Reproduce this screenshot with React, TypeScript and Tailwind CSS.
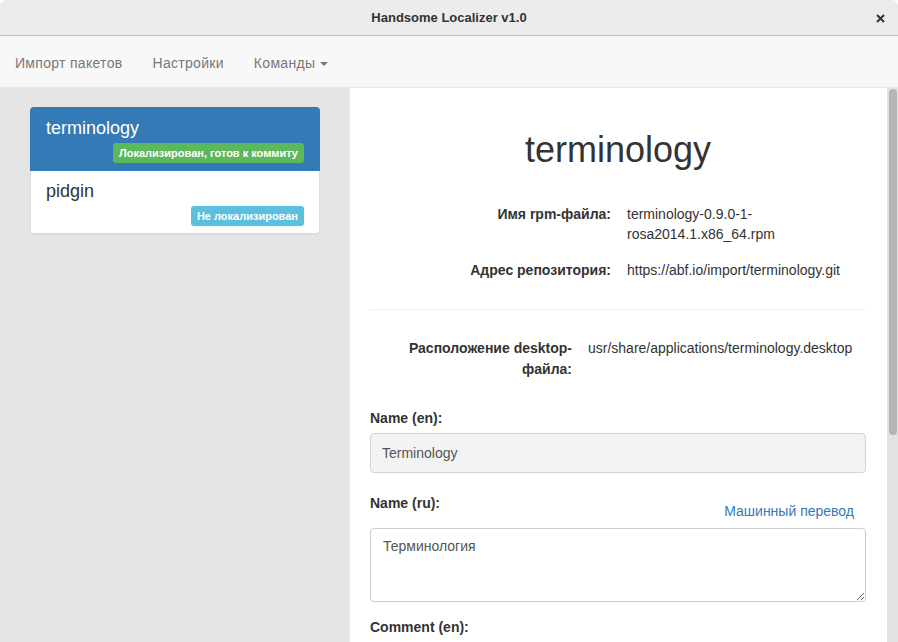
import React from "react";

const font = { fontFamily: '"Liberation Sans", Arial, sans-serif' };

function Badge({ color, children }: { color: string; children: React.ReactNode }) {
  return (
    <span
      className={`inline-flex h-[20px] items-center rounded-[3px] px-[6px] text-[11px] font-bold leading-none text-white ${color}`}
    >
      {children}
    </span>
  );
}

function PackageItem({ name, status, active }: any) {
  return (
    <div
      className={
        active
          ? "rounded-t-[4px] bg-[#337ab7] px-[16px] pb-[8px] pt-[11px] text-white"
          : "rounded-b-[4px] border-x border-b border-[#dddddd] bg-white px-[15px] pb-[7px] pt-[10px] text-[#333]"
      }
    >
      <div className="text-[18px] leading-[20px]">{name}</div>
      <div className="mt-[5px] flex justify-end">{status}</div>
    </div>
  );
}

export default function App() {
  return (
    <div className="flex h-[642px] w-[898px] flex-col overflow-hidden bg-white text-[14px] text-[#333]" style={font}>
      {/* window title */}
      <div className="relative flex h-[36px] shrink-0 items-center justify-center rounded-t-[6px] border-b border-[#bdbdbd] bg-[#ececec]">
        <span className="text-[13px] font-bold text-[#2e3436]">Handsome Localizer v1.0</span>
        <svg className="absolute right-[13px] top-[14px]" width="9" height="9" viewBox="0 0 9 9">
          <path d="M1 1L8 8M8 1L1 8" stroke="#2e3436" strokeWidth="2" />
        </svg>
      </div>

      {/* navbar */}
      <div className="flex h-[52px] shrink-0 items-center border-b border-[#e7e7e7] bg-[#f8f8f8] pt-[3px] tracking-[0.3px] text-[#777]">
        <span className="px-[15px]">Импорт пакетов</span>
        <span className="px-[15px]">Настройки</span>
        <span className="flex items-center px-[15px]">
          Команды
          <span className="ml-[5px] mt-[2px] h-0 w-0 border-x-[4px] border-t-[4px] border-x-transparent border-t-[#777]" />
        </span>
      </div>

      <div className="flex min-h-0 flex-1">
        {/* package list */}
        <div className="w-[350px] shrink-0 bg-[#e5e5e5] px-[30px] pt-[19px]">
          <div className="rounded-[4px] shadow-[0_1px_1px_rgba(0,0,0,0.05)]">
            <PackageItem
              active
              name="terminology"
              status={<Badge color="bg-[#5cb85c]">Локализирован, готов к коммиту</Badge>}
            />
            <PackageItem name="pidgin" status={<Badge color="bg-[#5bc0de]">Не локализирован</Badge>} />
          </div>
        </div>

        {/* details */}
        <div className="min-w-0 flex-1 pl-[20px] pr-[21px] pt-[42px]">
          <h1 className="text-center text-[36px] leading-[40px]">terminology</h1>

          <div className="mt-[34px] grid grid-cols-[241px_239px] gap-x-[16px] gap-y-[16px] leading-[20px]">
            <div className="text-right font-bold">Имя rpm-файла:</div>
            <div>
              terminology-0.9.0-1-
              <br />
              rosa2014.1.x86_64.rpm
            </div>
            <div className="text-right font-bold">Адрес репозитория:</div>
            <div>https://abf.io/import/terminology.git</div>
          </div>

          <div className="mt-[29px] h-px bg-[#eeeeee]" />

          <div className="mt-[28px] grid grid-cols-[202px_278px] gap-x-[16px] leading-[21px]">
            <div className="text-right font-bold">
              Расположение desktop-
              <br />
              файла:
            </div>
            <div>usr/share/applications/terminology.desktop</div>
          </div>

          <div className="mt-[28px] font-bold leading-[20px]">Name (en):</div>
          <input
            readOnly
            value="Terminology"
            className="mt-[5px] block h-[40px] w-full rounded-[4px] border border-[#d4d4d4] bg-[#f3f3f3] px-[11px] text-[14px] text-[#555] outline-none"
          />

          <div className="mt-[20px] flex items-start justify-between leading-[20px]">
            <span className="font-bold">Name (ru):</span>
            <span className="mr-[12px] mt-[8px] text-[#337ab7]">Машинный перевод</span>
          </div>
          <textarea
            readOnly
            defaultValue="Терминология"
            className="mt-[7px] block h-[74px] w-full resize-y rounded-[4px] border border-[#cccccc] bg-white px-[12px] py-[7px] text-[14px] leading-[20px] text-[#555] outline-none"
          />

          <div className="mt-[15px] font-bold leading-[20px]">Comment (en):</div>
        </div>

        {/* scrollbar */}
        <div className="w-[11px] shrink-0 bg-[#e2e2e2] pl-[2px] pr-[1px] pt-[1px]">
          <div className="h-[346px] w-[8px] rounded-full bg-[#b5b5b5]" />
        </div>
      </div>
    </div>
  );
}
